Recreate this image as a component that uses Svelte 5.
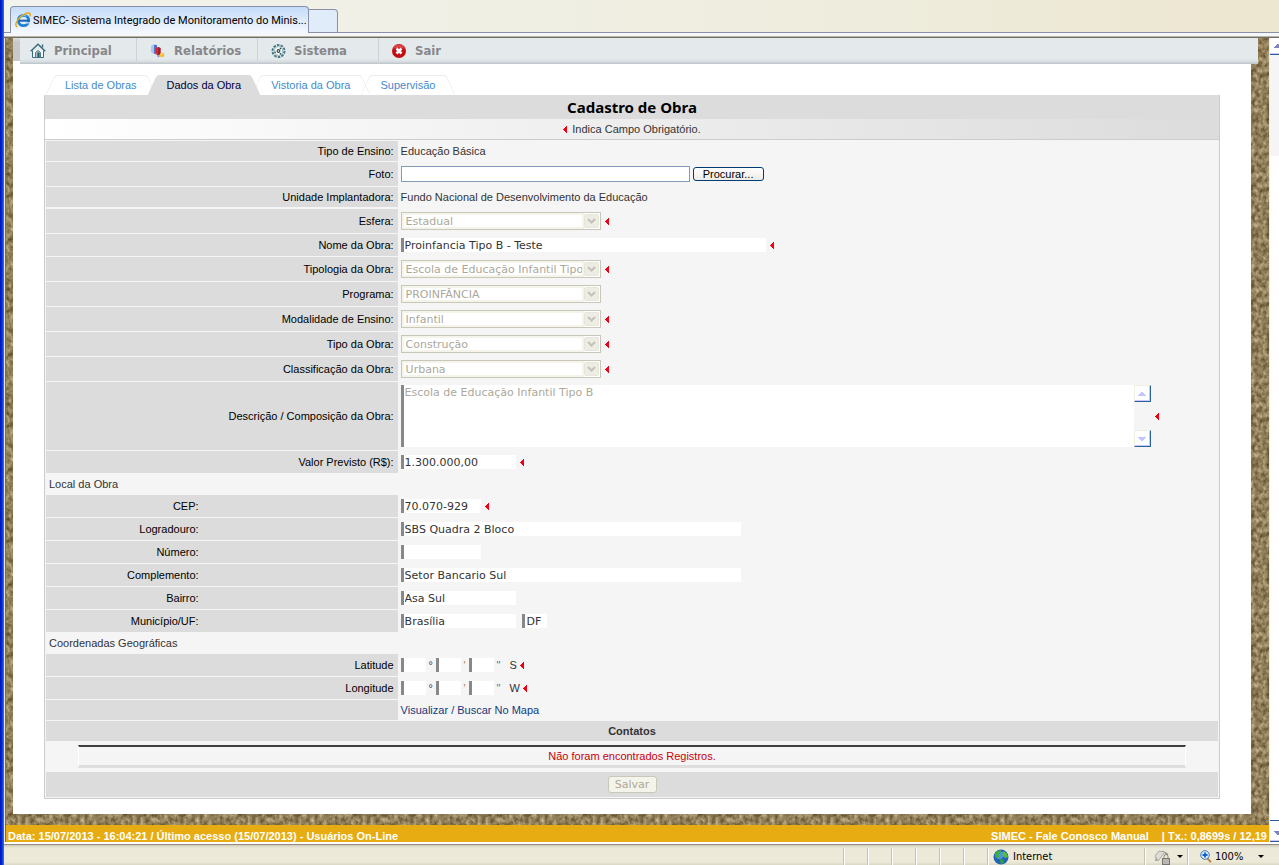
<script>
  const menu = [
    { id: 'home', label: 'Principal' },
    { id: 'reports', label: 'Relatórios' },
    { id: 'system', label: 'Sistema' },
    { id: 'exit', label: 'Sair' }
  ];
  const tabs = ['Lista de Obras', 'Dados da Obra', 'Vistoria da Obra', 'Supervisão'];
  let activeTab = $state(1);

  const workRows = [
    { id: 'esfera', label: 'Esfera:', type: 'select', value: 'Estadual', required: true },
    { id: 'nome', label: 'Nome da Obra:', type: 'text', value: 'Proinfancia Tipo B - Teste', size: 'xl', required: true },
    { id: 'tipologia', label: 'Tipologia da Obra:', type: 'select', value: 'Escola de Educação Infantil Tipo B', required: true },
    { id: 'programa', label: 'Programa:', type: 'select', value: 'PROINFÂNCIA' },
    { id: 'modalidade', label: 'Modalidade de Ensino:', type: 'select', value: 'Infantil', required: true },
    { id: 'tipo', label: 'Tipo da Obra:', type: 'select', value: 'Construção', required: true },
    { id: 'classificacao', label: 'Classificação da Obra:', type: 'select', value: 'Urbana', required: true },
    { id: 'descricao', label: 'Descrição / Composição da Obra:', type: 'area', value: 'Escola de Educação Infantil Tipo B', required: true },
    { id: 'valor', label: 'Valor Previsto (R$):', type: 'text', value: '1.300.000,00', size: 'm', required: true }
  ];
  const placeRows = [
    { id: 'cep', label: 'CEP:', value: '70.070-929', size: 's', required: true },
    { id: 'logradouro', label: 'Logradouro:', value: 'SBS Quadra 2 Bloco', size: 'l' },
    { id: 'numero', label: 'Número:', value: '', size: 's' },
    { id: 'complemento', label: 'Complemento:', value: 'Setor Bancario Sul', size: 'l' },
    { id: 'bairro', label: 'Bairro:', value: 'Asa Sul', size: 'm' },
    { id: 'municipio', label: 'Município/UF:', value: 'Brasília', size: 'm', uf: 'DF' }
  ];
  const coordinates = [
    { id: 'lat', label: 'Latitude', side: 'S' },
    { id: 'lon', label: 'Longitude', side: 'W' }
  ];
</script>

{#snippet mark()}
  <svg class="mark" width="4" height="7" viewBox="0 0 4 7" aria-hidden="true"><path d="M4 0v7H3V6H2V5H1V4H0V3H1V2H2V1H3V0z" fill="#f00012" /></svg>
{/snippet}

{#snippet icon(name)}
  {#if name === 'home'}
    <svg width="16" height="16" viewBox="0 0 16 16" fill="none" aria-hidden="true">
      <path d="M2.5 7.500V14.500H13.500V7.500" fill="#f4f8f8" stroke="#36697a" />
      <path d="M.7 8.200 8 1.300l7.300 6.900" stroke="#36697a" stroke-width="1.400" />
      <path d="M12.500 1.500v3" stroke="#36697a" stroke-width="1.400" />
      <path d="M5.500 14.500V9.500l2.500-2 2.500 2v5z" fill="#a9c4ca" stroke="#4b7c8a" />
      <path d="M8.500 9.500v5" stroke="#24505f" stroke-width="2" />
    </svg>
  {:else if name === 'reports'}
    <svg width="16" height="16" viewBox="0 0 16 16" aria-hidden="true">
      <path d="M1 3 4 1l3 1v8l-3 1-3-2z" fill="#a9c2f0" />
      <path d="M4 2l3 0v8l-3 1z" fill="#4f74cc" />
      <path d="M5.500 5 8 4l2.500 1V11L8 12.500 5.500 11z" fill="#d92929" />
      <path d="M8 4l2.500 1V11L8 12.500z" fill="#a31c38" />
      <circle cx="12" cy="12" r="2.300" fill="#f5bc2f" />
      <circle cx="8.500" cy="13" r="1.200" fill="#8b93c8" />
      <circle cx="11.500" cy="11.300" r=".8" fill="#ffe9a4" />
    </svg>
  {:else if name === 'system'}
    <svg width="15" height="16" viewBox="1 0 15 16" fill="none" aria-hidden="true">
      <circle cx="8.500" cy="8" r="6" fill="#f3f7f7" stroke="#477884" stroke-width="2" stroke-dasharray="2.600 1.100" />
      <circle cx="8.500" cy="8" r="4.400" fill="#f3f7f7" stroke="#8fb0b4" />
      <path d="M11 5l-1 1.200M4.500 9.500 6 9M11 11.500l-1-1.300" stroke="#244d58" stroke-width="1.200" />
      <circle cx="8.500" cy="8" r="1.900" fill="#3b4c50" />
      <circle cx="8.500" cy="8" r=".7" fill="#fff" />
    </svg>
  {:else if name === 'exit'}
    <svg width="15" height="16" viewBox="1 0 15 16" aria-hidden="true">
      <circle cx="8" cy="8" r="7" fill="#c30d12" />
      <path d="M2 6a6.300 6.300 0 0 1 12 0Q8 3.500 2 6z" fill="#e46a68" opacity=".6" />
      <path d="M5.500 5.500l5 5M10.500 5.500l-5 5" stroke="#fff" stroke-width="2.600" />
    </svg>
  {/if}
{/snippet}

{#snippet arrow(down)}
  <svg width="8" height="4" viewBox="0 0 8 4" aria-hidden="true">
    <path d={down ? 'M0 0h8v1H7v1H6v1H5v1H3V3H2V2H1V1H0z' : 'M0 4h8V3H7V2H6V1H5V0H3v1H2v1H1v1H0z'} fill="currentColor" />
  </svg>
{/snippet}

<div class="window">
  <header class="tabstrip">
    <div class="browser-tab">
      <svg width="16" height="16" viewBox="0 0 16 16" fill="none" aria-hidden="true">
        <circle cx="8.500" cy="8.500" r="5.200" stroke="#1d7fd6" stroke-width="2.800" />
        <path d="M4 8.700h10.500" stroke="#1764b8" stroke-width="2" />
        <path d="M10.500 10.200h4.500v1.300h-5z" fill="#cfe2fa" />
        <path d="M5 4.500Q8 2.500 11.500 4" stroke="#7ccaf8" />
        <path d="M2.500 14.800C-.8 14 1.300 8.500 5.500 4.800 9.500 1.300 14.500-.3 15.200 2.200c.2.700 0 1.500-.4 2.300" stroke="#e6a91a" stroke-width="1.500" />
      </svg>
      <span>SIMEC- Sistema Integrado de Monitoramento do Minis...</span>
    </div>
    <button class="new-tab" aria-label="Nova guia"></button>
  </header>

  <div class="viewport">
    <div class="page">
      <div class="nav-row">
        <nav>
          {#each menu as item}
            <a href="#{item.id}">{@render icon(item.id)}<span>{item.label}</span></a>
          {/each}
        </nav>
      </div>

      <main>
        <div class="tabs" role="tablist">
          {#each tabs as tab, i}
            <button role="tab" class:active={i === activeTab} aria-selected={i === activeTab} onclick={() => (activeTab = i)}><span>{tab}</span></button>
          {/each}
        </div>

        <form onsubmit={(e) => e.preventDefault()}>
          <h1>Cadastro de Obra</h1>
          <p class="hint">{@render mark()} Indica Campo Obrigatório.</p>

          <div class="rows">
            <div class="group first">
              <div class="row">
                <span class="label">Tipo de Ensino:</span>
                <div class="value">Educação Básica</div>
              </div>
              <div class="row tall">
                <label class="label" for="foto">Foto:</label>
                <div class="value file">
                  <input id="foto" type="text" />
                  <button type="button">Procurar...</button>
                </div>
              </div>
              <div class="row">
                <span class="label">Unidade Implantadora:</span>
                <div class="value">Fundo Nacional de Desenvolvimento da Educação</div>
              </div>
            </div>

            <div class="group">
              {#each workRows as row}
                <div class="row" class:tall={row.type === 'select'} class:mid={row.type === 'text'} class:area={row.type === 'area'}>
                  <label class="label" for={row.id}>{row.label}</label>
                  <div class="value">
                    {#if row.type === 'select'}
                      <span class="select">
                        <select id={row.id} disabled><option>{row.value}</option></select>
                        <svg width="16" height="16" viewBox="0 0 16 16" aria-hidden="true">
                          <rect width="16" height="16" fill="#fff" />
                          <rect x=".5" y="1.500" width="14" height="13" rx="1" fill="#eeede5" stroke="#e6e5da" />
                          <path d="M4 6l3.500 3.500L11 6" fill="none" stroke="#c5c3b9" stroke-width="2.200" />
                        </svg>
                      </span>
                    {:else if row.type === 'area'}
                      <span class="textarea">
                        <textarea id={row.id} disabled value={row.value}></textarea>
                        <span class="mini-scroll">
                          <button type="button" aria-label="Rolar para cima" disabled>{@render arrow(false)}</button>
                          <button type="button" aria-label="Rolar para baixo" disabled>{@render arrow(true)}</button>
                        </span>
                      </span>
                    {:else}
                      <input class="box {row.size}" id={row.id} type="text" value={row.value} />
                    {/if}
                    {#if row.required}{@render mark()}{/if}
                  </div>
                </div>
              {/each}
            </div>

            <div class="group">
              <h2>Local da Obra</h2>
              {#each placeRows as row}
                <div class="row mid place">
                  <label class="label" for={row.id}>{row.label}</label>
                  <div class="value">
                    <input class="box {row.size}" id={row.id} type="text" value={row.value} />
                    {#if row.uf}<input class="box xs uf" type="text" aria-label="UF" value={row.uf} />{/if}
                    {#if row.required}{@render mark()}{/if}
                  </div>
                </div>
              {/each}
            </div>

            <div class="group">
              <h2>Coordenadas Geográficas</h2>
              {#each coordinates as c}
                <div class="row mid">
                  <label class="label" for="{c.id}-g">{c.label}</label>
                  <div class="value coord">
                    <input class="box xs" id="{c.id}-g" type="text" /><span class="unit">°</span>
                    <input class="box xs" type="text" aria-label="{c.label}, minutos" /><span class="unit minute">'</span>
                    <input class="box xs" type="text" aria-label="{c.label}, segundos" /><span class="unit last">"</span>
                    <span>{c.side}</span>{@render mark()}
                  </div>
                </div>
              {/each}
              <div class="row">
                <span class="label"></span>
                <div class="value"><a href="#mapa">Visualizar / Buscar No Mapa</a></div>
              </div>
            </div>

            <h3>Contatos</h3>
            <div class="contacts"><p>Não foram encontrados Registros.</p></div>
            <div class="actions"><button type="submit" disabled>Salvar</button></div>
          </div>
        </form>
      </main>

      <footer>
        <span>Data: 15/07/2013 - 16:04:21 / Último acesso (15/07/2013) - Usuários On-Line</span>
        <span class="right"><span>SIMEC - Fale Conosco Manual</span><span>| Tx.: 0,8699s / 12,19</span></span>
      </footer>
    </div>

    <div class="scrollbar">
      <button aria-label="Rolar página para cima">{@render arrow(false)}</button>
      <div class="track"></div>
      <div class="thumb"></div>
      <button aria-label="Rolar página para baixo">{@render arrow(true)}</button>
    </div>
  </div>

  <div class="status">
    {#each Array(6) as _}<span class="cell"></span>{/each}
    <span class="cell zone">
      <svg width="16" height="16" viewBox="0 0 16 16" aria-hidden="true">
        <circle cx="8" cy="8" r="7.500" fill="#2363b8" />
        <circle cx="6.500" cy="6" r="4" fill="#4d95e2" />
        <path d="M2 4.500Q4 1 8 1.200L7.500 4 5.500 5.500 6 8 4 9.500 2.500 8z" fill="#3fae3c" />
        <path d="M10 2l3.500 2 1.500 4-3 1-2.500-2.500z" fill="#55c040" />
        <path d="M6.500 10l4 .8.500 2.700L8 15.200z" fill="#39a037" />
      </svg>
      <span>Internet</span>
    </span>
    <span class="cell protect">
      <svg width="17" height="16" viewBox="0 0 17 16" fill="none" aria-hidden="true">
        <path d="M2 12Q2 4 9 2.500l5 3" stroke="#9a9994" stroke-width="1.600" />
        <path d="M1 7l4-5 6 1-7 9z" fill="#dddcd6" stroke="#aaa9a3" />
        <rect x="8.500" y="9.500" width="7" height="6" fill="#b9b8b2" stroke="#777670" />
        <path d="M10 9.500V7.500a2 2 0 0 1 4 0v2" stroke="#85847e" />
      </svg>
      <svg class="caret" width="6" height="3" viewBox="0 0 6 3" aria-hidden="true"><path d="M0 0h6L3 3z" fill="#000" /></svg>
    </span>
    <span class="cell zoom">
      <svg width="12" height="13" viewBox="0 0 12 13" fill="none" aria-hidden="true">
        <path d="M7.500 8.500l3.500 3.700" stroke="#bf8745" stroke-width="2" />
        <circle cx="5" cy="5" r="4.300" fill="#d6ebff" stroke="#4279b8" />
        <path d="M5 2.500v5M2.500 5h5" stroke="#1660c4" stroke-width="1.800" />
      </svg>
      <span>100%</span>
      <svg class="caret" width="6" height="3" viewBox="0 0 6 3" aria-hidden="true"><path d="M0 0h6L3 3z" fill="#000" /></svg>
    </span>
  </div>
</div>

<style>
  :global(body) { margin: 0; background: #ece9d8; }
  * { box-sizing: border-box; }
  .window {
    min-height: 100vh;
    display: flex;
    flex-direction: column;
    padding-left: 4px;
    background: linear-gradient(90deg, #0012b4 0, #0a28d8 2px, #0c5cf0 3px, #2f7cf6 4px, transparent 4px);
    font: 11px/13px "Liberation Sans", Arial, sans-serif;
    color: #333;
  }
  button, input, select, textarea { font: inherit; color: inherit; margin: 0; border-radius: 0; }
  button { padding: 0; }
  h1, h2, h3, p { margin: 0; font: inherit; }
  svg { flex: none; }

  .tabstrip {
    height: 38px;
    display: flex;
    align-items: flex-end;
    padding: 0 6px 5px;
    background:
      linear-gradient(#8a90a8, #8a90a8) 0 32px / 100% 1px no-repeat,
      linear-gradient(#f5f7fb, #f5f7fb) 0 33px / 100% 3px no-repeat,
      linear-gradient(#b8b5a8, #b8b5a8) 0 36px / 100% 1px no-repeat,
      linear-gradient(#716f64, #716f64) 0 37px / 100% 1px no-repeat,
      linear-gradient(90deg, rgba(243, 243, 238, 1), rgba(238, 236, 220, 1) 70%, #ede6d0);
  }
  .browser-tab {
    width: 299px;
    height: 27px;
    display: flex;
    align-items: center;
    gap: 2px;
    padding: 0 4px;
    border: 1px solid #8a90a8;
    border-bottom: 0;
    border-radius: 4px 4px 0 0;
    background: linear-gradient(#c4dcfa, #f5f8fd);
    font-family: Roboto, "Liberation Sans", sans-serif;
    color: #000;
    white-space: nowrap;
  }
  .new-tab {
    width: 29px;
    height: 24px;
    border: 1px solid #8a90a8;
    border-left: 0;
    border-radius: 0 4px 0 0;
    background: #e1ecfa;
  }

  .viewport {
    flex: 1;
    display: flex;
    border-left: 1px solid #ece9d8;
  }
  .page {
    flex: 1;
    min-width: 0;
    display: flex;
    flex-direction: column;
    border-left: 1px solid #716f64;
    background-color: #92805a;
    background-image: url("data:image/svg+xml,%3Csvg xmlns='http://www.w3.org/2000/svg' width='115' height='115'%3E%3Cfilter id='n' x='0' y='0' width='100%25' height='100%25' color-interpolation-filters='sRGB'%3E%3CfeTurbulence type='fractalNoise' baseFrequency='.25 .2' numOctaves='3' seed='4' stitchTiles='stitch'/%3E%3CfeColorMatrix values='.6 0 0 0 .27 .6 0 0 0 .2 .55 0 0 0 .08 0 0 0 0 1'/%3E%3C/filter%3E%3Crect width='115' height='115' filter='url(%23n)'/%3E%3C/svg%3E");
  }

  .nav-row {
    display: flex;
    margin: 0 11px 0 7px;
  }
  .nav-row::before {
    content: "";
    width: 7px;
    background: linear-gradient(#dcdcdc, #c8c8c8 4px);
    border-bottom: 3px solid #fff;
  }
  nav {
    flex: 1;
    display: flex;
    height: 26px;
    background: linear-gradient(#e4e9ec 21px, #d5dbde 24px, #b8c2c6);
  }
  nav a {
    width: 121px;
    display: flex;
    align-items: center;
    gap: 8px;
    padding-left: 13px;
    border-right: 1px solid #ccd3d7;
    color: #87878a;
    font: bold 13px/16px Verdana, "DejaVu Sans Condensed", "DejaVu Sans", sans-serif;
    text-decoration: none;
  }
  nav a:first-child { width: 117px; padding-left: 10px; }
  nav a:last-child { border-right: 0; }

  main {
    flex: 1;
    margin: 0 18px 11px 7px;
    padding: 11px 31px 15px;
    background: #fff;
  }
  .tabs { display: flex; height: 20px; padding-left: 6px; }
  .tabs button {
    position: relative;
    padding: 0 15px;
    border: 0;
    background: none;
    color: #428bce;
    white-space: nowrap;
  }
  .tabs button span { position: relative; z-index: 2; }
  .tabs button::before, .tabs button::after {
    content: "";
    position: absolute;
    inset: 0 50% 0 0;
    border: 1px solid #ececec;
    border-width: 1px 0 0 1px;
    border-radius: 3px 0 0 0;
    transform: skewX(-25deg);
  }
  .tabs button::after {
    inset: 0 0 0 50%;
    border-width: 1px 1px 0 0;
    border-radius: 0 3px 0 0;
    transform: skewX(25deg);
  }
  .tabs .active { color: #000040; z-index: 1; }
  .tabs .active::before, .tabs .active::after { background: #dcdcdc; border-color: #dcdcdc; }
  .tabs .active::before { right: 40%; }
  .tabs .active::after { left: 40%; }

  form { border: 1px solid #ccc; border-top: 0; background: #f5f5f5; }
  h1 {
    height: 24px;
    background: #dcdcdc;
    color: #000;
    font: bold 15px/24px "Noto Sans", "Open Sans", sans-serif;
    text-align: center;
  }
  .hint {
    height: 21px;
    display: flex;
    align-items: center;
    justify-content: center;
    gap: 5px;
    border-bottom: 1px solid #ccc;
    background: linear-gradient(90deg, #fff, #dcdcdc);
  }
  .rows { padding: 1px; }
  .rows, .group { display: flex; flex-direction: column; gap: 1px; }
  .first { margin-bottom: 1px; }
  .row { display: grid; grid-template-columns: 30% 1fr; min-height: 20px; }
  .row.mid { min-height: 22px; }
  .row.tall { min-height: 24px; }
  .row.area { min-height: 68px; }
  .label {
    display: flex;
    align-items: center;
    justify-content: flex-end;
    padding-right: 4px;
    background: #dcdcdc;
    color: #000;
  }
  .place .label { padding-right: 199px; }
  .value { display: flex; align-items: center; gap: 4px; padding-left: 3px; min-width: 0; }
  .value a { color: #133a80; text-decoration: none; }
  .file { gap: 3px; }
  .file input { width: 289px; height: 16px; border: 1px solid #7f9db9; background: #fff; padding: 0 2px; }
  .file button {
    width: 71px;
    height: 14px;
    border: 1px solid #003c74;
    border-radius: 3px;
    background: linear-gradient(#fff, #ecebe5);
    color: #000;
    line-height: 12px;
  }
  .box, textarea {
    border: 0;
    border-left: 3px solid #888;
    background: #fff;
    color: #333;
    font-family: "DejaVu Sans", Verdana, sans-serif;
  }
  .box { height: 14px; padding: 0 1px; }
  .xl { width: 365px; }
  .l { width: 340px; }
  .m { width: 115px; }
  .s { width: 80px; }
  .xs { width: 25px; }
  .uf { margin-left: 2px; padding-left: 2px; }
  .select {
    display: flex;
    align-items: center;
    width: 200px;
    height: 18px;
    border: 1px solid #c9c7ba;
    background: #fff;
    box-shadow: inset 0 0 0 2px #f5f4ea;
  }
  select {
    appearance: none;
    flex: 1;
    min-width: 0;
    height: 14px;
    border: 0;
    border-right: 2px solid #f5f4ea;
    padding: 0 0 0 4px;
    background: none;
    color: #aca899;
    opacity: 1;
    font-family: "DejaVu Sans", Verdana, sans-serif;
  }
  .textarea { display: flex; width: 750px; height: 62px; }
  textarea {
    flex: 1;
    min-width: 0;
    padding: 1px;
    resize: none;
    overflow: hidden;
    color: #aca899;
  }
  .mini-scroll { width: 17px; display: flex; flex-direction: column; justify-content: space-between; }
  .mini-scroll button {
    height: 17px;
    display: grid;
    place-items: center;
    border: 1px solid #f0eedd;
    border-right-color: #2c629c;
    border-bottom-color: #2c629c;
    box-shadow: inset -1px -1px #c8c8fa;
    background: #fff;
    color: #c4c4fc;
  }
  h2 { height: 20px; padding-left: 3px; line-height: 20px; }
  .coord { gap: 0; }
  .unit { width: 10px; text-align: center; }
  .unit.minute { width: 8px; color: #b0804c; }
  .unit.last { width: 16px; text-align: left; padding-left: 3px; color: #3f7cae; }
  .coord .mark { margin-left: 3px; }

  h3 { height: 20px; background: #dcdcdc; font-weight: bold; line-height: 20px; text-align: center; }
  .contacts { padding: 3px 32px; }
  .contacts p {
    height: 23px;
    border: 1px solid #fff;
    border-top: 2px solid #3f3f3f;
    border-bottom: 3px solid #dedede;
    color: #c8000a;
    line-height: 18px;
    text-align: center;
  }
  .actions { height: 25px; display: grid; place-items: center; background: #dcdcdc; }
  .actions button {
    width: 49px;
    height: 17px;
    border: 1px solid #c9c7ba;
    border-radius: 3px;
    background: #f5f4ea;
    color: #aca899;
    font-family: "DejaVu Sans", Verdana, sans-serif;
    line-height: 15px;
  }

  footer {
    display: flex;
    justify-content: space-between;
    padding: 5px 2px 0;
    height: 17px;
    line-height: 12px;
    background: #e6ac11;
    color: #fff;
    font-weight: bold;
    white-space: nowrap;
  }
  .right { display: flex; gap: 13px; }

  .scrollbar {
    width: 10px;
    display: flex;
    flex-direction: column;
    border-left: 1px solid #f0eedd;
    background: #fff;
    color: #7f82c8;
  }
  .scrollbar button {
    height: 17px;
    border: 0;
    border-bottom: 1px solid #2c5c9c;
    background: #fff;
    box-shadow: inset 0 -1px #c8c8fa;
    display: flex;
    align-items: center;
    padding-left: 4px;
    overflow: hidden;
  }
  .track { height: 101px; background: #f5f5f5; }
  .thumb { flex: 1; border-bottom: 1px solid #2c5c9c; margin-bottom: 4px; }

  .status {
    height: 23px;
    display: flex;
    justify-content: flex-end;
    align-items: flex-end;
    border-top: 2px solid #fff;
    background: linear-gradient(#918e80 1px, #cfccbd 1px, #ece9d8 4px, #ece9d8 18px, #dad7c4);
    color: #000;
    font-family: "DejaVu Sans Condensed", "DejaVu Sans", sans-serif;
  }
  .cell {
    width: 24px;
    height: 17px;
    display: flex;
    align-items: center;
    border-left: 1px solid #c5c2b0;
    box-shadow: inset 1px 0 #fff;
  }
  .zone { width: 157px; gap: 4px; padding-left: 5px; }
  .protect { width: 43px; gap: 6px; padding-left: 9px; }
  .zoom { width: 92px; gap: 3px; padding-left: 12px; }
  .zoom .caret { margin-left: 12px; }
</style>
